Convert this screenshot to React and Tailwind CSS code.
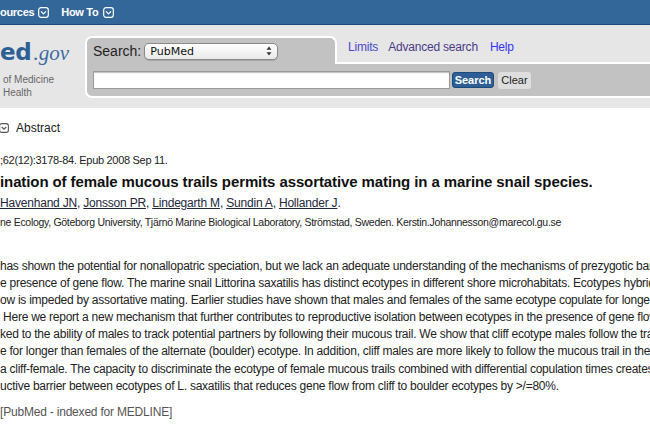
import React from "react"

function DownBox({ className = "" }) {
  return (
    <svg viewBox="0 0 12 12" className={className}>
      <rect x="0.75" y="0.75" width="10.5" height="10.5" rx="2.5" fill="none" stroke="currentColor" strokeWidth="1.3" />
      <path d="M3.3 4.8 L6 7.5 L8.7 4.8" fill="none" stroke="currentColor" strokeWidth="1.4" />
    </svg>
  )
}

function SelectArrows() {
  return (
    <svg viewBox="0 0 6 10" className="w-[6px] h-[10px]">
      <path d="M3 0.5 L5.5 3.8 H0.5 Z" fill="#333" />
      <path d="M3 9.5 L5.5 6.2 H0.5 Z" fill="#333" />
    </svg>
  )
}

const abstractLines = [
  "has shown the potential for nonallopatric speciation, but we lack an adequate understanding of the mechanisms of prezygotic barriers",
  "e presence of gene flow. The marine snail Littorina saxatilis has distinct ecotypes in different shore microhabitats. Ecotypes hybridize, but gene",
  "ow is impeded by assortative mating. Earlier studies have shown that males and females of the same ecotype copulate for longer",
  " Here we report a new mechanism that further contributes to reproductive isolation between ecotypes in the presence of gene flow.",
  "ked to the ability of males to track potential partners by following their mucous trail. We show that cliff ecotype males follow the trail",
  "e for longer than females of the alternate (boulder) ecotype. In addition, cliff males are more likely to follow the mucous trail in the",
  "a cliff-female. The capacity to discriminate the ecotype of female mucous trails combined with differential copulation times creates a",
  "uctive barrier between ecotypes of L. saxatilis that reduces gene flow from cliff to boulder ecotypes by >/=80%.",
]

export default function App() {
  const authors = ["Havenhand JN", "Jonsson PR", "Lindegarth M", "Sundin A", "Hollander J"]

  return (
    <div className="w-[650px] h-[433px] overflow-hidden bg-white font-['Liberation_Sans',Arial,sans-serif]">
      {/* Top nav */}
      <div className="h-[25px] bg-[#336699] border-b border-[#1d4c7c] flex items-center text-white font-bold text-[11px] tracking-[-0.3px] whitespace-nowrap">
        <span>ources</span>
        <DownBox className="w-[11px] h-[11px] ml-[4px]" />
        <span className="ml-[12px]">How To</span>
        <DownBox className="w-[11px] h-[11px] ml-[5px]" />
      </div>

      {/* Header */}
      <div className="h-[83px] bg-[#e6e6e6] flex">
        {/* Logo */}
        <div className="w-[85px] shrink-0 pt-[16px]">
          <div className="flex items-baseline h-[27px] leading-none">
            <span className="font-['DejaVu_Sans',sans-serif] font-bold text-[23px] tracking-[-0.3px] text-[#2c5f95]">ed</span>
            <span className="font-['Liberation_Serif',serif] italic text-[21px] text-[#3a6ca3] ml-[2px]">.gov</span>
          </div>
          <div className="pl-[3px] text-[10px] leading-[13px] text-[#666] mt-[5px]">
            <div>of Medicine</div>
            <div>Health</div>
          </div>
        </div>

        {/* Search panel */}
        <div className="flex-1 pt-[9px] flex flex-col">
          <div className="flex items-end">
            <div className="relative z-10 -mb-[2px] w-[252px] h-[28px] bg-[#c2c2c2] border-2 border-b-0 border-white rounded-t-[7px] flex items-center pl-[6px]">
              <span className="text-[14px] text-[#222]">Search:</span>
              <div className="ml-[3px] w-[134px] h-[17px] rounded-[5px] border border-[#8a8a8a] bg-gradient-to-b from-white to-[#e9e9e9] flex items-center justify-between pl-[5px] pr-[5px] shadow-[0_1px_1px_rgba(0,0,0,0.15)]">
                <span className="text-[11px] font-['DejaVu_Sans',sans-serif] text-[#111] leading-none">PubMed</span>
                <SelectArrows />
              </div>
            </div>
            <div className="flex items-center h-[28px] pb-[2px] text-[12px] tracking-[-0.2px] whitespace-nowrap">
              <span className="ml-[11px] text-[#4a48c6]">Limits</span>
              <span className="ml-[10px] text-[#4b3a86]">Advanced search</span>
              <span className="ml-[12px] text-[#3434ee]">Help</span>
            </div>
          </div>
          <div className="h-[36px] bg-[#c2c2c2] border-2 border-r-0 border-white rounded-bl-[7px] flex items-center pl-[6px]">
            <div className="w-[357px] h-[18px] bg-white border border-[#9a9a9a] shadow-[inset_0_1px_1px_rgba(0,0,0,0.25)]" />
            <div className="ml-[2px] w-[42px] h-[16px] rounded-[3px] bg-[#2d5f96] border border-[#1e4a7a] flex items-center justify-center text-white font-bold text-[11px]">
              Search
            </div>
            <div className="ml-[4px] w-[33px] h-[17px] rounded-[3px] bg-[#dedede] flex items-center justify-center text-[#222] text-[11px]">
              Clear
            </div>
          </div>
        </div>
      </div>

      {/* Content */}
      <div className="whitespace-nowrap">
        <div className="h-[38px] flex items-center pt-[1px]">
          <DownBox className="w-[10px] h-[10px] -ml-[1px] text-[#555]" />
          <span className="ml-[7px] text-[12px] text-[#222]">Abstract</span>
        </div>
        <div className="h-[27px] flex items-center pt-[1px] text-[11px] tracking-[-0.3px] text-[#222]">;62(12):3178-84. Epub 2008 Sep 11.</div>
        <div className="h-[18px] flex items-center text-[15px] font-bold text-[#111] tracking-[-0.1px]">
          ination of female mucous trails permits assortative mating in a marine snail species.
        </div>
        <div className="h-[24px] leading-[24px] text-[12px] tracking-[-0.2px] text-[#22263a]">
          {authors.map((a, i) => (
            <React.Fragment key={a}>
              <span className="underline">{a}</span>
              {i < authors.length - 1 ? ", " : "."}
            </React.Fragment>
          ))}
        </div>
        <div className="h-[16px] flex items-center text-[10.5px] tracking-[-0.3px] text-[#222]">
          ne Ecology, Göteborg University, Tjärnö Marine Biological Laboratory, Strömstad, Sweden. Kerstin.Johannesson@marecol.gu.se
        </div>

        <div className="pt-[27px] text-[12px] tracking-[-0.25px] leading-[17.1px] text-[#222]">
          {abstractLines.map((l, i) => (
            <div key={i} className="whitespace-pre">{l}</div>
          ))}
        </div>

        <div className="mt-[9px] h-[17px] leading-[17px] text-[12px] tracking-[-0.2px] text-[#555]">[PubMed - indexed for MEDLINE]</div>
      </div>
    </div>
  )
}
